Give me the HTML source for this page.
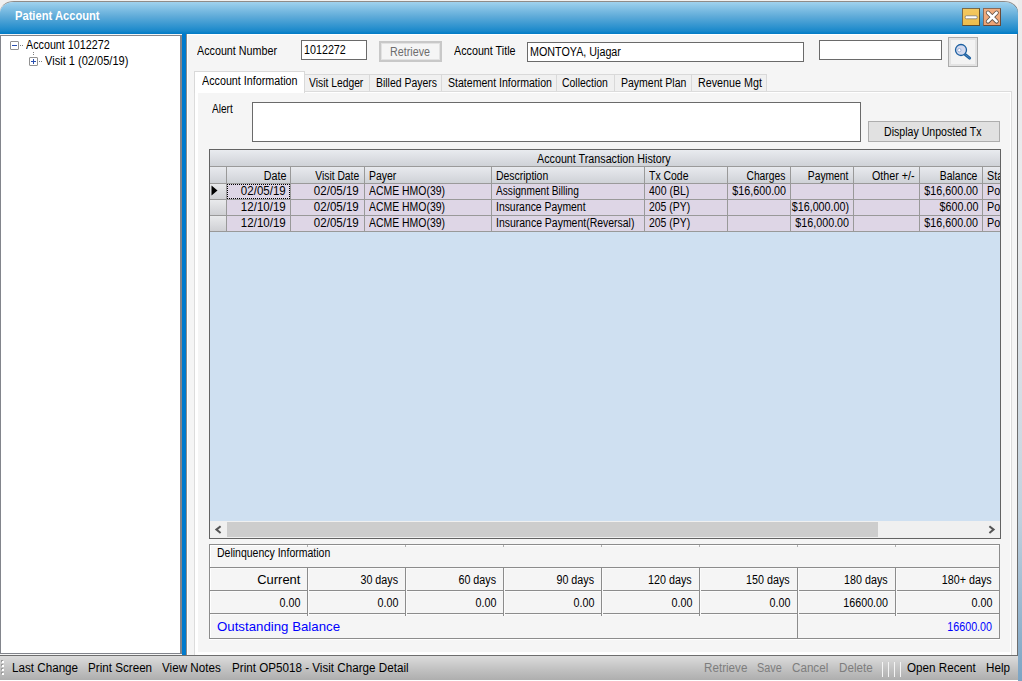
<!DOCTYPE html>
<html><head><meta charset="utf-8"><title>Patient Account</title>
<style>
html,body{margin:0;padding:0}
body{width:1022px;height:681px;overflow:hidden;background:#f0f0f0;position:relative;font-family:"Liberation Sans",sans-serif;font-size:12px;color:#000}
.a{position:absolute;box-sizing:border-box}
.t{position:absolute;white-space:nowrap;transform:scaleX(var(--k,.895));transform-origin:0 0;line-height:14px;font-size:12px}
.r{transform-origin:100% 0;text-align:right}
.s{position:absolute;white-space:nowrap;font-size:12.5px;line-height:14px;transform:scaleX(var(--k,.932));transform-origin:0 0;top:661px}
.g{color:#7d7d7d}
.tab{position:absolute;box-sizing:border-box;top:74px;height:17px;background:#f0f0f0;border:1px solid #d9d9d9;border-bottom:none;border-left:none}
.vl{position:absolute;width:1px;background:#999}
.hl{position:absolute;height:1px;background:#999}
</style></head><body>
<!-- desktop strip on right -->
<div class="a" style="left:1018px;top:0;width:4px;height:681px;background:linear-gradient(#ececec 0%,#e8eaec 37%,#cdd9e2 66%,#c0d1de 76%,#98b7cf 90%,#7ba4c4 100%)"></div>
<!-- window frame -->
<div class="a" id="frame" style="left:0;top:1px;width:1018px;height:679px;background:#f5f5f5;border-top:1px solid #8f8b88;border-right:1px solid #6e6e6e;border-radius:14px 14px 0 0/11px 11px 0 0"></div>
<!-- title bar -->
<div class="a" id="title" style="left:0;top:2px;width:1018px;height:32px;border-radius:14px 14px 0 0/11px 11px 0 0;background:linear-gradient(#a0d2ee 0%,#5fabd9 45%,#1b89cb 90%,#0a80c8 96%,#007ac5 100%)"></div>
<div class="t" style="left:15px;top:9px;color:#fff;font-weight:bold;font-size:12.5px;transform:scaleX(.893)">Patient Account</div>
<!-- left tree panel -->
<div class="a" id="tree" style="left:0;top:35px;width:182px;height:619px;background:#fff;border:1px solid #82858c;border-right-width:2px"></div>
<!-- splitter -->
<div class="a" style="left:182px;top:34px;width:4px;height:621px;background:#007acc"></div>
<div class="a" style="left:186px;top:34px;width:1px;height:621px;background:#8c8c8c"></div>
<!-- main panel -->
<div class="a" id="main" style="left:187px;top:34px;width:830px;height:621px;background:#f5f5f5;border-left:1px solid #fff;border-top:1px solid #fff"></div>
<!-- toolbar -->
<div class="a" id="tb" style="left:0;top:655px;width:1018px;height:25px;border-top:1px solid #6e6e6e;background:linear-gradient(#dcdcdc,#c4c4c4 50%,#aeaeae)"></div>
<div class="a" style="left:0;top:680px;width:1018px;height:1px;background:#fff"></div>
<!-- title buttons -->
<div class="a" style="left:962px;top:8px;width:18px;height:18px;background:linear-gradient(#f3c860,#eebd4c);border:1px solid #7a6a4a;border-right-color:#5e4e30;border-bottom-color:#5e4e30"></div>
<svg class="a" style="left:962px;top:8px" width="18" height="18" viewBox="0 0 18 18"><rect x="3.2" y="7.8" width="12" height="3" rx="1.2" fill="#fff" stroke="#6b6b6b" stroke-width=".7"/></svg>
<div class="a" style="left:983px;top:8px;width:18px;height:18px;background:linear-gradient(#f2ae80,#eca274);border:1px solid #8a6a58;border-right-color:#6a4a38;border-bottom-color:#6a4a38"></div>
<svg class="a" style="left:983px;top:8px" width="18" height="18" viewBox="0 0 18 18"><path d="M5 4.8 L13.6 13.4 M13.6 4.8 L5 13.4" stroke="#5e5148" stroke-width="4.3" stroke-linecap="round"/><path d="M5 4.8 L13.6 13.4 M13.6 4.8 L5 13.4" stroke="#fff" stroke-width="2.7" stroke-linecap="round"/></svg>
<!-- tree content -->
<div class="a" style="left:10px;top:41px;width:9px;height:9px;border:1px solid #919191;background:#fff;border-radius:1px"></div>
<div class="a" style="left:12px;top:45px;width:5px;height:1px;background:#2a4fb0"></div>
<div class="a" style="left:20px;top:45px;width:1px;height:1px;background:#808080"></div><div class="a" style="left:22px;top:45px;width:1px;height:1px;background:#808080"></div>
<div class="t" style="left:26px;top:38px">Account 1012272</div>
<div class="a" style="left:33px;top:52px;width:1px;height:1px;background:#808080"></div><div class="a" style="left:33px;top:54px;width:1px;height:1px;background:#808080"></div>
<div class="a" style="left:29px;top:57px;width:9px;height:9px;border:1px solid #919191;background:#fff;border-radius:1px"></div>
<div class="a" style="left:31px;top:61px;width:5px;height:1px;background:#2a4fb0"></div><div class="a" style="left:33px;top:59px;width:1px;height:5px;background:#2a4fb0"></div>
<div class="a" style="left:39px;top:61px;width:1px;height:1px;background:#808080"></div><div class="a" style="left:41px;top:61px;width:1px;height:1px;background:#808080"></div>
<div class="t" style="left:45px;top:54px;transform:scaleX(.922)">Visit 1 (02/05/19)</div>
<!-- toolbar content -->
<div class="a" style="left:2px;top:661px;width:2px;height:2px;background:#fff;box-shadow:0 4px #fff,0 8px #fff,0 12px #fff,-1px -1px #9a9a9a,-1px 3px #9a9a9a,-1px 7px #9a9a9a,-1px 11px #9a9a9a"></div>
<div class="s" style="left:12px">Last Change</div>
<div class="s" style="left:88px">Print Screen</div>
<div class="s" style="left:162px">View Notes</div>
<div class="s" style="left:232px">Print OP5018 - Visit Charge Detail</div>
<div class="s g" style="left:704px">Retrieve</div>
<div class="s g" style="left:757px;--k:.87">Save</div>
<div class="s g" style="left:792px">Cancel</div>
<div class="s g" style="left:839px">Delete</div>
<div class="a" style="left:882px;top:662px;width:1px;height:15px;background:#f5f5f5;box-shadow:6px 0 #f4f4f4,12px 0 #f4f4f4,18px 0 #f4f4f4"></div>
<div class="s" style="left:907px">Open Recent</div>
<div class="s" style="left:986px">Help</div>
<!-- account row -->
<div class="t" style="left:197px;top:44px">Account Number</div>
<div class="a" style="left:301px;top:40px;width:66px;height:20px;background:#fff;border:1px solid #6a6a6a"></div>
<div class="t" style="left:304px;top:43px">1012272</div>
<div class="a" style="left:379px;top:41px;width:63px;height:21px;background:#f5f5f5;border:2px solid #c8c8c8;box-shadow:inset 0 0 0 1px #e2e2e2"></div>
<div class="t g" style="left:390px;top:45px;color:#6d6d6d">Retrieve</div>
<div class="t" style="left:454px;top:44px">Account Title</div>
<div class="a" style="left:527px;top:42px;width:277px;height:20px;background:#fff;border:1px solid #6a6a6a"></div>
<div class="t" style="left:530px;top:45px">MONTOYA, Ujagar</div>
<div class="a" style="left:819px;top:40px;width:123px;height:20px;background:#fff;border:1px solid #6a6a6a"></div>
<div class="a" style="left:948px;top:37px;width:30px;height:30px;background:#f3f3f3;border:1px solid #ababab;box-shadow:inset 0 0 0 2px #e3e3e3"></div>
<svg class="a" style="left:948px;top:37px" width="30" height="30" viewBox="0 0 30 30"><path d="M17 17.3 L21.6 21.1" stroke="#1b5fa0" stroke-width="3" stroke-linecap="round"/><path d="M17.6 17.8 L21.4 20.9" stroke="#4f86bd" stroke-width="1" stroke-linecap="round"/><circle cx="13" cy="13" r="5.5" fill="#d2d9ee" stroke="#1b5fa0" stroke-width="1.3"/><circle cx="11.3" cy="13.2" r="1.7" fill="#fff" stroke="#8ea6d2" stroke-width=".8"/></svg>
<!-- tab page -->
<div class="a" style="left:194px;top:91px;width:818px;height:564px;background:#fff;border:1px solid #dcdcdc;border-bottom:none"></div>
<div class="a" style="left:198px;top:93px;width:812px;height:559px;background:#f5f5f5"></div>
<!-- tabs -->
<div class="a" style="left:194px;top:71px;width:111px;height:22px;background:#fff;border:1px solid #d9d9d9;border-bottom:none"></div>
<div class="t" style="left:202px;top:74px">Account Information</div>
<div class="tab" style="left:305px;width:65px"></div><div class="t" style="left:309px;top:76px;--k:0.86">Visit Ledger</div>
<div class="tab" style="left:370px;width:72px"></div><div class="t" style="left:376px;top:76px;--k:0.87">Billed Payers</div>
<div class="tab" style="left:442px;width:115px"></div><div class="t" style="left:448px;top:76px;--k:0.88">Statement Information</div>
<div class="tab" style="left:557px;width:58px"></div><div class="t" style="left:562px;top:76px;--k:0.87">Collection</div>
<div class="tab" style="left:615px;width:77px"></div><div class="t" style="left:621px;top:76px;--k:0.875">Payment Plan</div>
<div class="tab" style="left:692px;width:75px"></div><div class="t" style="left:698px;top:76px">Revenue Mgt</div>
<!-- alert -->
<div class="t" style="left:212px;top:102px;--k:0.84">Alert</div>
<div class="a" style="left:252px;top:102px;width:609px;height:40px;background:#fff;border:1px solid #6a6a6a"></div>
<div class="a" style="left:868px;top:121px;width:132px;height:21px;background:#e1e1e1;border:1px solid #adadad"></div>
<div class="t" style="left:884px;top:125px;--k:.882">Display Unposted Tx</div>
<!-- grid -->
<div class="a" id="grid" style="left:209px;top:149px;width:792px;height:390px;background:#cfe0f1;border:1px solid #636363;overflow:hidden"></div>
<div class="a" style="left:210px;top:150px;width:790px;height:16px;background:linear-gradient(#e9ebef,#cfd2d7)"></div>
<div class="hl" style="left:210px;top:166px;width:790px;background:#9a9a9a"></div>
<div class="t" style="left:537px;top:152px">Account Transaction History</div>
<div class="a" style="left:210px;top:167px;width:790px;height:16px;background:linear-gradient(#e8eaee,#cfd2d7)"></div>
<div class="hl" style="left:210px;top:183px;width:790px;background:#9a9a9a"></div>
<div class="a" style="left:227px;top:184px;width:773px;height:48px;background:#ded6e6"></div>
<div class="a" style="left:210px;top:184px;width:16px;height:15px;background:linear-gradient(#e9eaec,#cfd0d4)"></div><div class="a" style="left:210px;top:200px;width:16px;height:15px;background:linear-gradient(#e9eaec,#cfd0d4)"></div><div class="a" style="left:210px;top:216px;width:16px;height:15px;background:linear-gradient(#e9eaec,#cfd0d4)"></div>
<div class="hl" style="left:210px;top:199px;width:790px"></div>
<div class="hl" style="left:210px;top:215px;width:790px"></div>
<div class="hl" style="left:210px;top:231px;width:790px"></div>
<div class="vl" style="left:226px;top:167px;height:65px"></div>
<div class="vl" style="left:290px;top:167px;height:65px"></div>
<div class="vl" style="left:364px;top:167px;height:65px"></div>
<div class="vl" style="left:491px;top:167px;height:65px"></div>
<div class="vl" style="left:644px;top:167px;height:65px"></div>
<div class="vl" style="left:727px;top:167px;height:65px"></div>
<div class="vl" style="left:790px;top:167px;height:65px"></div>
<div class="vl" style="left:853px;top:167px;height:65px"></div>
<div class="vl" style="left:919px;top:167px;height:65px"></div>
<div class="vl" style="left:982px;top:167px;height:65px"></div>
<div class="t r" style="right:736px;top:169px">Date</div>
<div class="t r" style="right:663px;top:169px;--k:0.858">Visit Date</div>
<div class="t" style="left:369px;top:169px;--k:0.87">Payer</div>
<div class="t" style="left:496px;top:169px;--k:0.87">Description</div>
<div class="t" style="left:649px;top:169px;--k:0.87">Tx Code</div>
<div class="t r" style="right:237px;top:169px;--k:0.858">Charges</div>
<div class="t r" style="right:174px;top:169px;--k:0.856">Payment</div>
<div class="t r" style="right:107px;top:169px">Other +/-</div>
<div class="t r" style="right:45px;top:169px;--k:0.865">Balance</div>
<div class="t r" style="right:736px;top:184px;--k:0.96">02/05/19</div>
<div class="t r" style="right:663px;top:184px;--k:0.96">02/05/19</div>
<div class="t" style="left:369px;top:184px;--k:0.87">ACME HMO(39)</div>
<div class="t" style="left:496px;top:184px;--k:0.845">Assignment Billing</div>
<div class="t" style="left:649px;top:184px;--k:0.875">400 (BL)</div>
<div class="t r" style="right:236px;top:184px">$16,600.00</div>
<div class="t r" style="right:44px;top:184px">$16,600.00</div>
<div class="t r" style="right:736px;top:200px;--k:0.96">12/10/19</div>
<div class="t r" style="right:663px;top:200px;--k:0.96">02/05/19</div>
<div class="t" style="left:369px;top:200px;--k:0.87">ACME HMO(39)</div>
<div class="t" style="left:496px;top:200px;--k:0.866">Insurance Payment</div>
<div class="t" style="left:649px;top:200px;--k:0.87">205 (PY)</div>
<div class="t r" style="right:173px;top:200px">$16,000.00)</div>
<div class="t r" style="right:44px;top:200px">$600.00</div>
<div class="t r" style="right:736px;top:216px;--k:0.96">12/10/19</div>
<div class="t r" style="right:663px;top:216px;--k:0.96">02/05/19</div>
<div class="t" style="left:369px;top:216px;--k:0.87">ACME HMO(39)</div>
<div class="t" style="left:496px;top:216px;--k:0.872">Insurance Payment(Reversal)</div>
<div class="t" style="left:649px;top:216px;--k:0.87">205 (PY)</div>
<div class="t r" style="right:173px;top:216px">$16,000.00</div>
<div class="t r" style="right:44px;top:216px">$16,600.00</div>
<div class="a" style="left:983px;top:167px;width:17px;height:65px;overflow:hidden"><div class="t" style="left:3.5px;top:2px">Sta</div><div class="t" style="left:4px;top:17px">Po</div><div class="t" style="left:4px;top:33px">Po</div><div class="t" style="left:4px;top:49px">Po</div></div>
<svg class="a" style="left:210.5px;top:185px" width="8" height="11" viewBox="0 0 8 11"><path d="M0.5 0.5 L6.5 5.5 L0.5 10.5 Z" fill="#000"/></svg>
<div class="a" style="left:227px;top:184px;width:63px;height:15px;border:1px dotted #000"></div>
<div class="a" style="left:210px;top:521px;width:790px;height:17px;background:#f0f0f0"></div>
<div class="a" style="left:227px;top:522px;width:651px;height:15px;background:#cdcdcd"></div>
<svg class="a" style="left:214px;top:525px" width="9" height="9" viewBox="0 0 9 9"><path d="M6.6 1.2 L2.4 4.6 L6.6 8" fill="none" stroke="#555" stroke-width="2"/></svg>
<svg class="a" style="left:987px;top:525px" width="9" height="9" viewBox="0 0 9 9"><path d="M2.4 1.2 L6.6 4.6 L2.4 8" fill="none" stroke="#555" stroke-width="2"/></svg>
<!-- delinquency -->
<div class="a" style="left:209px;top:544px;width:791px;height:95px;background:#f5f5f5;border:1px solid #8c8c8c;box-shadow:inset 1px 1px 0 #fff"></div>
<div class="hl" style="left:209px;top:639px;width:791px;background:#fff"></div>
<div class="hl" style="left:210px;top:567px;width:789px;background:#8c8c8c;box-shadow:0 1px 0 #fbfbfb"></div>
<div class="hl" style="left:210px;top:590px;width:789px;background:#8c8c8c;box-shadow:0 1px 0 #fbfbfb"></div>
<div class="hl" style="left:210px;top:613px;width:789px;background:#8c8c8c;box-shadow:0 1px 0 #fbfbfb"></div>
<div class="vl" style="left:307px;top:568px;height:48px;background:#8c8c8c;box-shadow:1px 0 0 #fbfbfb"></div>
<div class="vl" style="left:307px;top:545px;height:2px;background:#b0b0b0"></div>
<div class="vl" style="left:405px;top:568px;height:48px;background:#8c8c8c;box-shadow:1px 0 0 #fbfbfb"></div>
<div class="vl" style="left:405px;top:545px;height:2px;background:#b0b0b0"></div>
<div class="vl" style="left:503px;top:568px;height:48px;background:#8c8c8c;box-shadow:1px 0 0 #fbfbfb"></div>
<div class="vl" style="left:503px;top:545px;height:2px;background:#b0b0b0"></div>
<div class="vl" style="left:601px;top:568px;height:48px;background:#8c8c8c;box-shadow:1px 0 0 #fbfbfb"></div>
<div class="vl" style="left:601px;top:545px;height:2px;background:#b0b0b0"></div>
<div class="vl" style="left:699px;top:568px;height:48px;background:#8c8c8c;box-shadow:1px 0 0 #fbfbfb"></div>
<div class="vl" style="left:699px;top:545px;height:2px;background:#b0b0b0"></div>
<div class="vl" style="left:797px;top:568px;height:48px;background:#8c8c8c;box-shadow:1px 0 0 #fbfbfb"></div>
<div class="vl" style="left:797px;top:545px;height:2px;background:#b0b0b0"></div>
<div class="vl" style="left:895px;top:568px;height:48px;background:#8c8c8c;box-shadow:1px 0 0 #fbfbfb"></div>
<div class="vl" style="left:895px;top:545px;height:2px;background:#b0b0b0"></div>
<div class="vl" style="left:797px;top:614px;height:24px;background:#8c8c8c"></div>
<div class="t" style="left:217px;top:546px;--k:.875">Delinquency Information</div>
<div class="t r" style="right:722px;top:572.5px;font-size:13.6px;--k:.95">Current</div>
<div class="t r" style="right:624px;top:573px">30 days</div>
<div class="t r" style="right:526px;top:573px">60 days</div>
<div class="t r" style="right:428px;top:573px">90 days</div>
<div class="t r" style="right:330px;top:573px">120 days</div>
<div class="t r" style="right:232px;top:573px">150 days</div>
<div class="t r" style="right:134px;top:573px">180 days</div>
<div class="t r" style="right:30px;top:573px">180+ days</div>
<div class="t r" style="right:722px;top:596px">0.00</div>
<div class="t r" style="right:624px;top:596px">0.00</div>
<div class="t r" style="right:526px;top:596px">0.00</div>
<div class="t r" style="right:428px;top:596px">0.00</div>
<div class="t r" style="right:330px;top:596px">0.00</div>
<div class="t r" style="right:232px;top:596px">0.00</div>
<div class="t r" style="right:134px;top:596px">16600.00</div>
<div class="t r" style="right:30px;top:596px">0.00</div>
<div class="t" style="left:217px;top:620px;font-size:13.6px;--k:.975;color:#0000ff">Outstanding Balance</div>
<div class="t r" style="right:30px;top:620px;color:#0000ff">16600.00</div>
</body></html>
